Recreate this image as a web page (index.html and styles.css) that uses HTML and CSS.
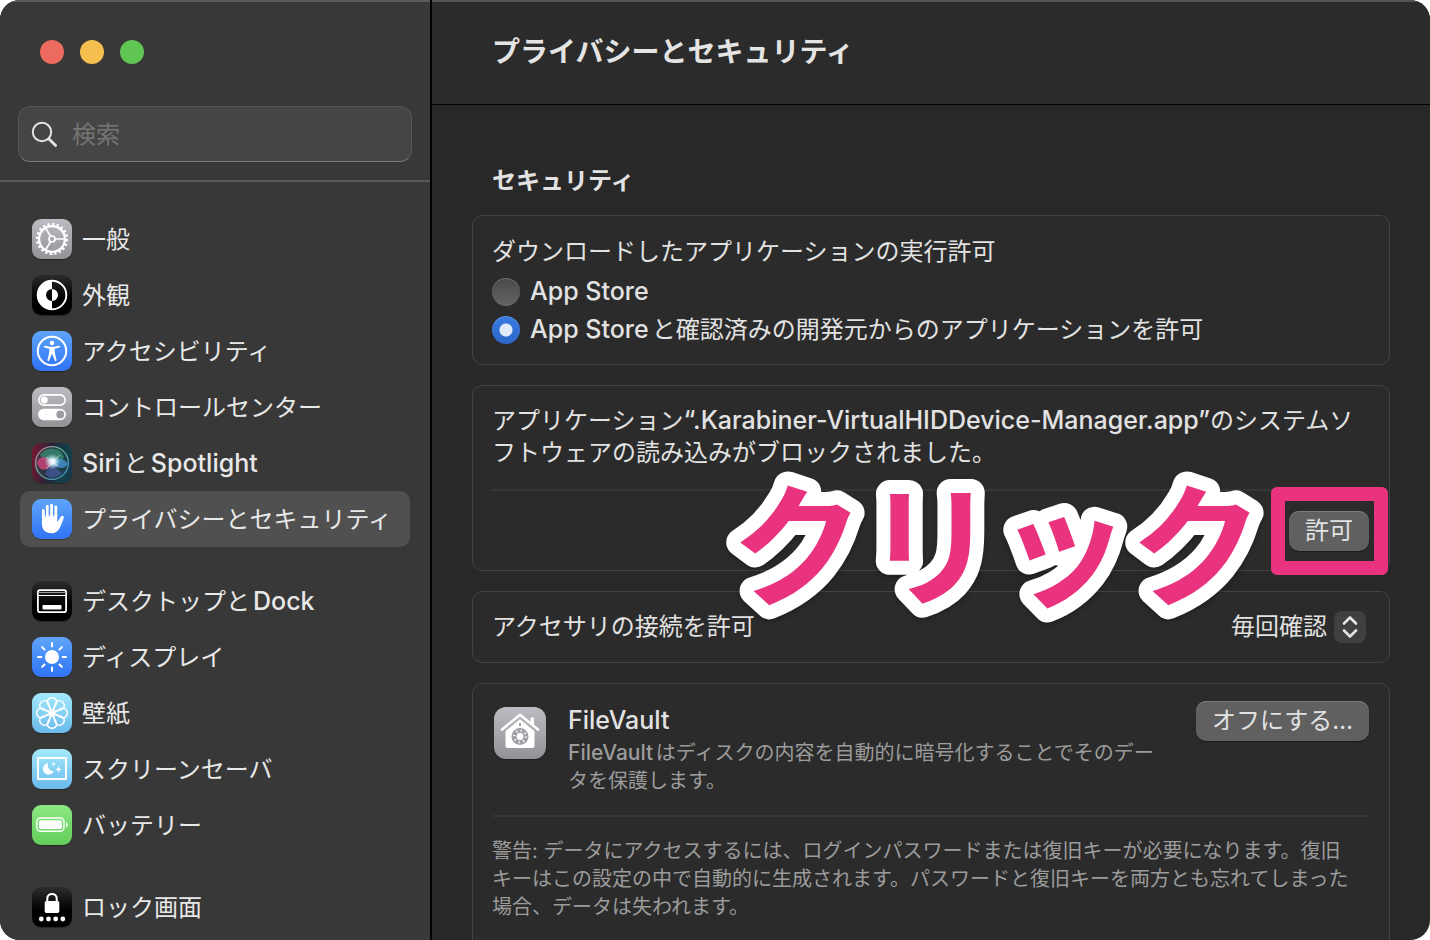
FILE: index.html
```html
<!DOCTYPE html>
<html lang="ja">
<head>
<meta charset="UTF-8">
<meta name="viewport" content="width=device-width, initial-scale=1.0">
<title>プライバシーとセキュリティ</title>
<link rel="stylesheet" href="styles.css">
</head>
<body>

<div class="window">
  <aside class="sidebar">
    <div class="traffic-lights">
      <button type="button" class="light light-close" aria-label="閉じる"></button>
      <button type="button" class="light light-minimize" aria-label="しまう"></button>
      <button type="button" class="light light-zoom" aria-label="拡大"></button>
    </div>

    <label class="search">
      <svg width="28" height="28" viewBox="0 0 28 28" fill="none" stroke="#e4e4e4" stroke-linecap="round" aria-hidden="true">
        <circle cx="11" cy="12" r="9.2" stroke-width="2"/>
        <path d="M18 19l6.600 6.600" stroke-width="2.800"/>
      </svg>
      <input type="search" placeholder="検索" aria-label="検索">
    </label>

    <nav class="nav">
      <div class="nav-group">
        <a href="#general" class="nav-item">
          <!-- Gear -->
          <svg class="icon icon-gray" viewBox="0 0 40 40" fill="none" stroke="#fff" aria-hidden="true">
            <circle cx="20" cy="20" r="14.600" stroke-width="3" stroke-dasharray="2 2" pathLength="80"/>
            <circle cx="20" cy="20" r="12.900" stroke-width="2.200"/>
            <circle cx="20" cy="20" r="3" stroke-width="1.700"/>
            <path d="M23 20h10M18.500 17.400L13.500 8.800M18.500 22.600L13.500 31.200" stroke-width="1.700"/>
          </svg>
          <span>一般</span>
        </a>
        <a href="#appearance" class="nav-item">
          <svg class="icon icon-black" viewBox="0 0 40 40" aria-hidden="true">
            <circle cx="20" cy="20" r="14.300" fill="none" stroke="#fff" stroke-width="1.900"/>
            <path d="M20 5.500a14.500 14.500 0 0 0 0 29v-8.500a6 6 0 0 1 0-12z" fill="#fff"/>
            <path d="M20 14a6 6 0 0 1 0 12z" fill="#fff"/>
          </svg>
          <span>外観</span>
        </a>
        <a href="#accessibility" class="nav-item">
          <svg class="icon icon-blue" viewBox="0 0 40 40" aria-hidden="true">
            <circle cx="20" cy="20" r="14.200" fill="none" stroke="#fff" stroke-width="2"/>
            <circle cx="20" cy="12" r="2.200" fill="#fff"/>
            <path d="M12.800 14.800l5.200 1h4l5.200-1a.8.8 0 0 1 .2 1.600l-4.700 1.300c-.2 2 .1 4.200.6 6.200l1.300 5.200a.9.9 0 0 1-1.700.5L20.200 23h-.4l-2.700 6.600a.9.9 0 0 1-1.700-.5l1.300-5.200c.5-2 .8-4.200.6-6.200l-4.700-1.300a.8.8 0 0 1 .2-1.600z" fill="#fff"/>
          </svg>
          <span>アクセシビリティ</span>
        </a>
        <a href="#control-center" class="nav-item">
          <svg class="icon icon-gray" viewBox="0 0 40 40" aria-hidden="true">
            <rect x="6.800" y="7.900" width="26.400" height="10.200" rx="5.100" fill="none" stroke="#fff" stroke-width="1.600"/>
            <circle cx="12.200" cy="13" r="3.500" fill="#fff"/>
            <rect x="6" y="21.700" width="28" height="11.600" rx="5.800" fill="#fff"/>
            <circle cx="28.300" cy="27.500" r="3.900" fill="#9b9ba0"/>
          </svg>
          <span>コントロールセンター</span>
        </a>
        <a href="#siri" class="nav-item">
          <svg class="icon icon-siri" viewBox="0 0 40 40" aria-hidden="true">
            <defs>
              <linearGradient id="siri-ring" x1="0" y1="0" x2="1" y2="1">
                <stop offset="0" stop-color="#e36a98"/>
                <stop offset=".4" stop-color="#67b796"/>
                <stop offset="1" stop-color="#3a86c8"/>
              </linearGradient>
              <radialGradient id="siri-glow">
                <stop offset="0" stop-color="#fff"/>
                <stop offset=".35" stop-color="#e8f6ff" stop-opacity=".9"/>
                <stop offset="1" stop-color="#9fd8e8" stop-opacity="0"/>
              </radialGradient>
            </defs>
            <circle cx="20" cy="20" r="16.400" fill="#27444f" fill-opacity=".55" stroke="url(#siri-ring)" stroke-width="1.300"/>
            <path d="M8 12C14 3 28 3 32 14c-3 6-8 6-12 6-5 0-9-3-12-8z" fill="#3fae84" fill-opacity=".55"/>
            <path d="M5 20c1-7 9-8 15-1-3 9-12 11-15 1z" fill="#d9477c" fill-opacity=".75"/>
            <path d="M20 20c5-6 12-5 16 1-4 6-11 5-16-1z" fill="#4a9ad8" fill-opacity=".75"/>
            <path d="M13 31c2-5 5-9 8-11 3 4 6 8 9 10-5 6-13 6-17 1z" fill="#5c6bd0" fill-opacity=".45"/>
            <circle cx="20.500" cy="18.500" r="8" fill="url(#siri-glow)"/>
            <path d="M14 14l12 9M28 12L14 26" stroke="#fff" stroke-width="1" stroke-opacity=".55"/>
          </svg>
          <span><span class="latin">Siri</span>と<span class="latin">Spotlight</span></span>
        </a>
        <a href="#privacy" class="nav-item nav-item-selected" aria-current="page">
          <!-- Raised hand -->
          <svg class="icon icon-blue" viewBox="0 0 40 40" aria-hidden="true">
            <path d="M11.400 18V11.500M15.300 17V7.500M19.600 17V6.300M23.800 17V8" stroke="#fff" stroke-width="2.900" stroke-linecap="round"/>
            <path d="M9.950 16h15.300v7.300l3.700-5.800c.9-1.300 3.200-.7 2.800 1.100-.5 2.500-1.900 5.500-3.100 8.400-1.700 4.300-4.300 7.300-9.200 7.300-6.300 0-9.500-3.800-9.500-9.500z" fill="#fff"/>
            <path d="M13.350 10v8M17.400 9v8.500M21.700 9v8.500" stroke="#4a90f8" stroke-width=".8"/>
          </svg>
          <span>プライバシーとセキュリティ</span>
        </a>
      </div>

      <div class="nav-group">
        <a href="#desktop" class="nav-item">
          <svg class="icon icon-black" viewBox="0 0 40 40" aria-hidden="true">
            <rect x="5.900" y="9.100" width="28.200" height="22" rx="2.200" fill="none" stroke="#fff" stroke-width="1.800"/>
            <path d="M6 11.500h28" stroke="#999" stroke-width="1"/>
            <path d="M6 14.500h28" stroke="#fff" stroke-width="1"/>
            <rect x="10.500" y="24" width="19" height="4.500" rx=".8" fill="#fff"/>
          </svg>
          <span>デスクトップと<span class="latin">Dock</span></span>
        </a>
        <a href="#display" class="nav-item">
          <svg class="icon icon-blue" viewBox="0 0 40 40" aria-hidden="true">
            <circle cx="20" cy="20" r="7" fill="#fff"/>
            <path d="M20 6v3.400M20 30.600V34M6 20h3.400M30.600 20H34M10.100 10.100l2.400 2.400M27.500 27.500l2.400 2.400M29.900 10.100l-2.400 2.400M12.500 27.500l-2.400 2.400" stroke="#fff" stroke-width="2" stroke-linecap="round"/>
          </svg>
          <span>ディスプレイ</span>
        </a>
        <a href="#wallpaper" class="nav-item">
          <!-- Flower made of eight overlapping petals -->
          <svg class="icon icon-sky" viewBox="0 0 40 40" fill="none" stroke="#fff" stroke-width="1.400" aria-hidden="true">
            <defs><path id="petal" d="M20 4.800c-4.600 0-5.600 4.200-3.800 7.200L22.300 22M20 4.800c4.600 0 5.600 4.200 3.800 7.200L17.700 22"/></defs>
            <use href="#petal"/>
            <use href="#petal" transform="rotate(45 20 20)"/>
            <use href="#petal" transform="rotate(90 20 20)"/>
            <use href="#petal" transform="rotate(135 20 20)"/>
            <use href="#petal" transform="rotate(180 20 20)"/>
            <use href="#petal" transform="rotate(225 20 20)"/>
            <use href="#petal" transform="rotate(270 20 20)"/>
            <use href="#petal" transform="rotate(315 20 20)"/>
          </svg>
          <span>壁紙</span>
        </a>
        <a href="#screensaver" class="nav-item">
          <svg class="icon icon-sky" viewBox="0 0 40 40" aria-hidden="true">
            <rect x="6" y="9" width="28" height="21" fill="none" stroke="#fff" stroke-width="1.900"/>
            <path d="M16 14.200a5.700 5.700 0 1 0 5.800 8.100A6.200 6.200 0 0 1 16 14.200z" fill="#fff"/>
            <path d="M21.500 12.500l.6 2 2 .6-2 .6-.6 2-.6-2-2-.6 2-.6zM26.500 17l.9 2.400 2.400.9-2.400.9-.9 2.400-.9-2.400-2.400-.9 2.400-.9z" fill="#fff"/>
          </svg>
          <span>スクリーンセーバ</span>
        </a>
        <a href="#battery" class="nav-item">
          <svg class="icon icon-green" viewBox="0 0 40 40" aria-hidden="true">
            <rect x="4.800" y="13" width="27.200" height="13.300" rx="3.800" fill="none" stroke="#fff" stroke-width="1.400"/>
            <rect x="7" y="15.200" width="22.800" height="8.900" rx="1.800" fill="#fff"/>
            <path d="M34 17.200c2.300.8 2.300 4.100 0 4.900z" fill="#fff"/>
          </svg>
          <span>バッテリー</span>
        </a>
      </div>

      <div class="nav-group">
        <a href="#lock" class="nav-item">
          <svg class="icon icon-black" viewBox="0 0 40 40" aria-hidden="true">
            <path d="M15.300 15v-3.500c0-6 9.400-6 9.400 0V15" fill="none" stroke="#fff" stroke-width="2"/>
            <rect x="12.700" y="14" width="14.600" height="12" rx="1.800" fill="#fff"/>
            <circle cx="9.300" cy="32" r="2.400" fill="#fff"/>
            <circle cx="16.500" cy="32" r="2.400" fill="#fff"/>
            <circle cx="23.700" cy="32" r="2.400" fill="#fff"/>
            <circle cx="30.800" cy="32" r="2.400" fill="#fff"/>
          </svg>
          <span>ロック画面</span>
        </a>
      </div>
    </nav>
  </aside>

  <main class="main">
    <header class="toolbar">
      <h1>プライバシーとセキュリティ</h1>
    </header>

    <div class="content">
      <h2>セキュリティ</h2>

      <fieldset class="card card-source">
        <legend class="card-label">ダウンロードしたアプリケーションの実行許可</legend>
        <label class="radio-row">
          <input type="radio" name="source">
          <span><span class="latin">App Store</span></span>
        </label>
        <label class="radio-row">
          <input type="radio" name="source" checked>
          <span><span class="latin">App Store</span>と確認済みの開発元からのアプリケーションを許可</span>
        </label>
      </fieldset>

      <section class="card">
        <p>アプリケーション<span class="latin">“.Karabiner-VirtualHIDDevice-Manager.app”</span>のシステムソ<br>フトウェアの読み込みがブロックされました。</p>
        <hr>
        <div class="actions">
          <button type="button" class="button">許可</button>
          <span class="highlight"></span>
          <svg class="callout" width="560" height="180" viewBox="0 0 560 180">
            <text x="8" y="138">クリック</text>
          </svg>
        </div>
      </section>

      <section class="card card-accessory">
        <label for="accessory">アクセサリの接続を許可</label>
        <div class="select">
          <select id="accessory">
            <option>毎回確認</option>
          </select>
          <svg width="32" height="32" viewBox="0 0 32 32" fill="none" stroke="#e4e4e4" stroke-width="2.600" stroke-linecap="round" stroke-linejoin="round" aria-hidden="true">
            <path d="M10 12.500L16 6.500l6 6M10 19.500l6 6 6-6"/>
          </svg>
        </div>
      </section>

      <section class="card card-filevault">
        <div class="filevault">
          <svg class="vault-icon icon-gray" viewBox="0 0 52 52" aria-hidden="true">
            <path d="M36.500 10.500h3.500v10l-3.500-3.200z" fill="#fff"/>
            <path d="M8 22.500L26 7.800l18 14.700" fill="none" stroke="#fff" stroke-width="2.600" stroke-linecap="round" stroke-linejoin="round"/>
            <path d="M26 12.200l14.500 11.900v14.400q0 2.500-2.500 2.500H14q-2.500 0-2.500-2.500V24.100z" fill="#fff"/>
            <circle cx="26" cy="29.500" r="8.500" fill="#a0a0a5"/>
            <circle cx="26" cy="29.500" r="5.800" fill="none" stroke="#fff" stroke-width="2.400" stroke-dasharray="1.100 3.450"/>
            <circle cx="26" cy="29.500" r="3.400" fill="#fff"/>
            <path d="M26 16v3" stroke="#a0a0a5" stroke-width="2"/>
          </svg>
          <div class="filevault-text">
            <h3>FileVault</h3>
            <p><span class="latin-small">FileVault</span>はディスクの内容を自動的に暗号化することでそのデー<br>タを保護します。</p>
          </div>
          <button type="button" class="button">オフにする…</button>
        </div>
        <hr>
        <p class="warning">警告: データにアクセスするには、ログインパスワードまたは復旧キーが必要になります。復旧<br>キーはこの設定の中で自動的に生成されます。パスワードと復旧キーを両方とも忘れてしまった<br>場合、データは失われます。</p>
      </section>
    </div>
  </main>
</div>

</body>
</html>
```
FILE: styles.css
```css
* {
  box-sizing: border-box;
}
body {
  margin: 0;
  background-color: #fff;
  color: #e2e2e2;
  font-family: Inter, "Noto Sans CJK JP", sans-serif;
  font-size: 24px;
  line-height: 32px;
  text-autospace: normal;
}
h1, h2, h3, p {
  margin: 0;
}
input, select, button {
  font: inherit;
  color: inherit;
}
/* Latin names sit slightly larger and heavier than the kana around them */
.latin, h3 {
  font-size: 25px;
  font-weight: 500;
}
.latin-small {
  font-size: 21px;
  font-weight: 500;
}
.latin, .latin-small {
  line-height: 1;
}
.window {
  display: grid;
  grid-template-columns: 432px 1fr;
  height: 100vh;
  overflow: hidden;
  border-radius: 20px;
  background-color: #282828;
}

/* Sidebar */
.sidebar {
  min-height: 0;
  overflow: hidden;
  background-color: #383838;
  border-right: 2px solid #000;
  box-shadow: inset 0 2px 0 #5c5c5c;
}
.traffic-lights {
  display: flex;
  gap: 16px;
  padding: 40px 40px 42px;
}
.light {
  width: 24px;
  height: 24px;
  padding: 0;
  border: none;
  border-radius: 50%;
}
.light-close {
  background-color: #ed6a5e;
}
.light-minimize {
  background-color: #f5bf4f;
}
.light-zoom {
  background-color: #61c554;
}
.search {
  display: flex;
  align-items: center;
  gap: 13px;
  height: 56px;
  margin: 0 18px 18px;
  padding: 0 12px;
  border: 1px solid #565656;
  border-bottom-color: #7b7b7b;
  border-radius: 12px;
  background-color: #454545;
}
.search input {
  flex: 1;
  min-width: 0;
  padding: 2px 0 0;
  border: none;
  outline: none;
  background: none;
}
.search input::placeholder {
  color: #757575;
}
.nav {
  display: flex;
  flex-direction: column;
  gap: 26px;
  padding: 29px 20px;
  border-top: 2px solid #595959;
}
.nav-item {
  display: flex;
  align-items: center;
  gap: 10px;
  height: 56px;
  padding: 0 12px;
  border-radius: 10px;
  color: #e8e8e8;
  text-decoration: none;
  white-space: nowrap;
}
.nav-item > span {
  padding-top: 2px;
}
.nav-item-selected {
  background-color: #505050;
}
.icon {
  flex: none;
  width: 40px;
  height: 40px;
  border-radius: 9px;
  box-shadow: 0 1px 1px rgba(0, 0, 0, 0.3);
}
.icon-gray {
  background: linear-gradient(#bdbcc2, #929297);
}
.icon-black {
  background: linear-gradient(#2c2c2c, #000 60%);
}
.icon-blue {
  background: linear-gradient(#5fa5fa, #3478f6 90%);
}
.icon-sky {
  background: linear-gradient(#a4eafb, #6fbdec 90%);
}
.icon-green {
  background: linear-gradient(#8be882, #64cd5b);
}
.icon-siri {
  background: linear-gradient(100deg, #7d1733, #252439 45%, #13424a 80%, #1c3450);
}

/* Main pane */
.main {
  min-width: 0;
  min-height: 0;
  overflow: hidden;
}
.toolbar {
  display: flex;
  align-items: center;
  height: 105px;
  padding: 0 60px;
  border-bottom: 1px solid #000;
  background-color: #2b2b2b;
  box-shadow: inset 0 2px 0 #555;
}
h1 {
  font-size: 28px;
  font-weight: 700;
  color: #e4e4e4;
}
.content {
  display: flex;
  flex-direction: column;
  gap: 20px;
  padding: 62px 40px 0;
}
h2 {
  padding: 0 20px;
  font-size: 24px;
  font-weight: 700;
  line-height: 28px;
}
.card {
  margin: 0;
  padding: 19px 20px 19px 19px;
  border: 1px solid #444;
  border-radius: 10px;
  background-color: #2b2b2b;
}
hr {
  height: 2px;
  margin: 20px 0;
  border: none;
  background-color: #363636;
}
.card-source {
  padding: 16px 19px 15px;
}
.card-label {
  float: left;
  width: 100%;
  margin-bottom: 1px;
  padding: 0;
  line-height: 40px;
}
.radio-row {
  display: flex;
  clear: both;
  align-items: center;
  gap: 10px;
  line-height: 38px;
}
.radio-row input {
  appearance: none;
  width: 28px;
  height: 28px;
  margin: 0;
  border-radius: 50%;
  background: linear-gradient(#494949, #656565);
  box-shadow: inset 0 1px 0 #6a6a6a;
}
.radio-row input:checked {
  background: radial-gradient(circle, #e1eaf8 6px, transparent 7px), linear-gradient(#3a7be0, #2c66c8);
  box-shadow: inset 0 1px 0 #5c93e8;
}
.actions {
  display: flex;
  justify-content: flex-end;
  position: relative;
}
.button {
  flex: none;
  height: 40px;
  padding: 0 16px;
  border: none;
  border-radius: 10px;
  background-color: #606060;
  box-shadow: inset 0 1px 0 #7c7c7c, 0 1px 1px rgba(0, 0, 0, 0.4);
  line-height: 38px;
}
/* Frame and caption drawn over the allow button */
.highlight {
  position: absolute;
  top: -24px;
  right: -19px;
  width: 117px;
  height: 88px;
  border: 14px solid #ea337f;
  border-radius: 6px;
  pointer-events: none;
}
.callout {
  position: absolute;
  top: -53px;
  right: 86px;
  overflow: visible;
  pointer-events: none;
  filter: drop-shadow(0 2px 2px rgba(0, 0, 0, 0.3));
}
.callout text {
  font-family: "Noto Sans CJK JP", sans-serif;
  font-size: 133px;
  font-weight: 700;
  fill: #ea337f;
  stroke: #fff;
  stroke-width: 28px;
  stroke-linejoin: round;
  paint-order: stroke;
}
.card-accessory {
  display: flex;
  align-items: center;
  justify-content: space-between;
}
.select {
  display: flex;
  position: relative;
  margin-right: 3px;
}
.select select {
  appearance: none;
  height: 32px;
  padding: 0 39px 0 0;
  border: none;
  background: none;
}
.select svg {
  position: absolute;
  top: 0;
  right: 0;
  border-radius: 8px;
  background-color: #404040;
  pointer-events: none;
}
.card-filevault {
  padding-top: 17px;
  padding-bottom: 40px;
}
.filevault {
  display: flex;
  align-items: flex-start;
}
.vault-icon {
  flex: none;
  width: 52px;
  height: 52px;
  margin: 6px 22px 0 2px;
  border-radius: 12px;
  box-shadow: 0 1px 1px rgba(0, 0, 0, 0.3);
}
.filevault-text {
  flex: 1;
}
h3 {
  line-height: 38px;
}
.filevault p, .warning {
  color: #9c9c9c;
  font-size: 20px;
  line-height: 28px;
}
```
